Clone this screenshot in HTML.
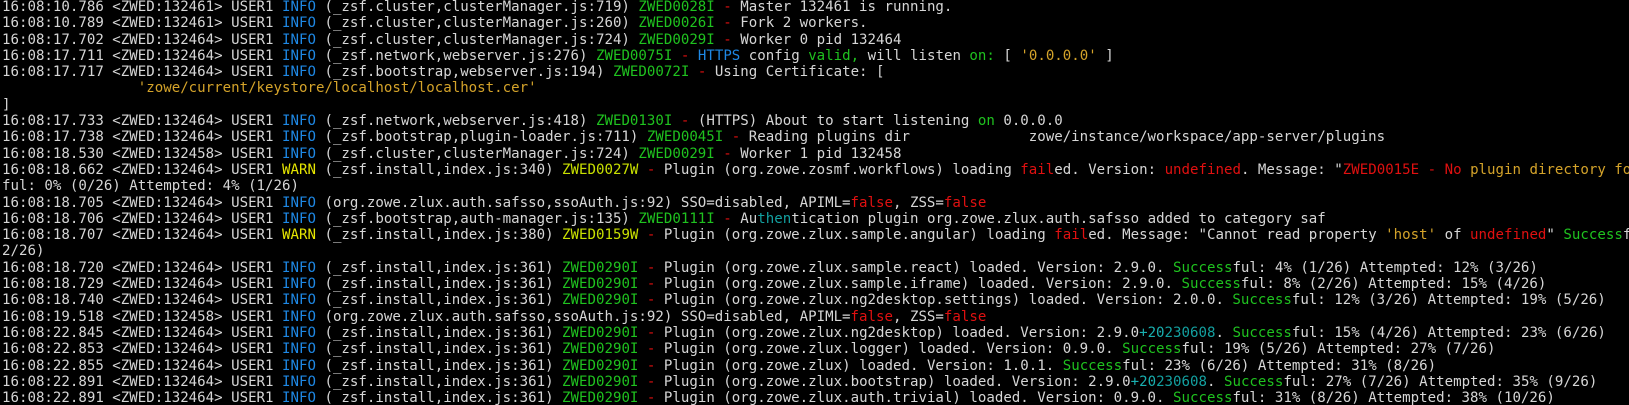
<!DOCTYPE html>
<html><head><meta charset="utf-8"><style>
html,body{margin:0;padding:0;background:#000;width:1629px;height:405px;overflow:hidden}
pre{margin:0;padding:0 0 0 2px;position:relative;top:-1px;font-family:"DejaVu Sans Mono","Liberation Mono",monospace;font-size:14.1px;line-height:16.3px;color:#d6d6d6;white-space:pre;overflow:hidden}
.b{color:#1e88e5}.g{color:#1fc21f}.r{color:#e01010}.y{color:#e6e600}.yg{color:#c8e000}.o{color:#d4a32a}.c{color:#19b0b0}.t{color:#13a0a0}
</style></head><body><pre>16:08:10.786 &lt;ZWED:132461&gt; USER1 <span class="b">INFO</span> (_zsf.cluster,clusterManager.js:719) <span class="g">ZWED0028I</span> <span class="r">-</span> Master 132461 is running.
16:08:10.789 &lt;ZWED:132461&gt; USER1 <span class="b">INFO</span> (_zsf.cluster,clusterManager.js:260) <span class="g">ZWED0026I</span> <span class="r">-</span> Fork 2 workers.
16:08:17.702 &lt;ZWED:132464&gt; USER1 <span class="b">INFO</span> (_zsf.cluster,clusterManager.js:724) <span class="g">ZWED0029I</span> <span class="r">-</span> Worker 0 pid 132464
16:08:17.711 &lt;ZWED:132464&gt; USER1 <span class="b">INFO</span> (_zsf.network,webserver.js:276) <span class="g">ZWED0075I</span> <span class="r">-</span> <span class="b">HTTPS</span> config <span class="g">valid,</span> will listen <span class="g">on:</span> [ <span class="o">'0.0.0.0'</span> ]
16:08:17.717 &lt;ZWED:132464&gt; USER1 <span class="b">INFO</span> (_zsf.bootstrap,webserver.js:194) <span class="g">ZWED0072I</span> <span class="r">-</span> Using Certificate: [
                <span class="o">'zowe/current/keystore/localhost/localhost.cer'</span>
]
16:08:17.733 &lt;ZWED:132464&gt; USER1 <span class="b">INFO</span> (_zsf.network,webserver.js:418) <span class="g">ZWED0130I</span> <span class="r">-</span> (HTTPS) About to start listening <span class="g">on</span> 0.0.0.0
16:08:17.738 &lt;ZWED:132464&gt; USER1 <span class="b">INFO</span> (_zsf.bootstrap,plugin-loader.js:711) <span class="g">ZWED0045I</span> <span class="r">-</span> Reading plugins dir              zowe/instance/workspace/app-server/plugins
16:08:18.530 &lt;ZWED:132458&gt; USER1 <span class="b">INFO</span> (_zsf.cluster,clusterManager.js:724) <span class="g">ZWED0029I</span> <span class="r">-</span> Worker 1 pid 132458
16:08:18.662 &lt;ZWED:132464&gt; USER1 <span class="y">WARN</span> (_zsf.install,index.js:340) <span class="yg">ZWED0027W</span> <span class="r">-</span> Plugin (org.zowe.zosmf.workflows) loading <span class="r">fail</span>ed. Version: <span class="r">undefined</span>. Message: "<span class="r">ZWED0015E - No</span> <span class="o">plugin directory found</span>
ful: 0% (0/26) Attempted: 4% (1/26)
16:08:18.705 &lt;ZWED:132464&gt; USER1 <span class="b">INFO</span> (org.zowe.zlux.auth.safsso,ssoAuth.js:92) SSO=disabled, APIML=<span class="r">false</span>, ZSS=<span class="r">false</span>
16:08:18.706 &lt;ZWED:132464&gt; USER1 <span class="b">INFO</span> (_zsf.bootstrap,auth-manager.js:135) <span class="g">ZWED0111I</span> <span class="r">-</span> Au<span class="t">then</span>tication plugin org.zowe.zlux.auth.safsso added to category saf
16:08:18.707 &lt;ZWED:132464&gt; USER1 <span class="y">WARN</span> (_zsf.install,index.js:380) <span class="yg">ZWED0159W</span> <span class="r">-</span> Plugin (org.zowe.zlux.sample.angular) loading <span class="r">fail</span>ed. Message: "Cannot read property <span class="o">'host'</span> of <span class="r">undefined</span>" <span class="g">Success</span>ful
2/26)
16:08:18.720 &lt;ZWED:132464&gt; USER1 <span class="b">INFO</span> (_zsf.install,index.js:361) <span class="g">ZWED0290I</span> <span class="r">-</span> Plugin (org.zowe.zlux.sample.react) loaded. Version: 2.9.0. <span class="g">Success</span>ful: 4% (1/26) Attempted: 12% (3/26)
16:08:18.729 &lt;ZWED:132464&gt; USER1 <span class="b">INFO</span> (_zsf.install,index.js:361) <span class="g">ZWED0290I</span> <span class="r">-</span> Plugin (org.zowe.zlux.sample.iframe) loaded. Version: 2.9.0. <span class="g">Success</span>ful: 8% (2/26) Attempted: 15% (4/26)
16:08:18.740 &lt;ZWED:132464&gt; USER1 <span class="b">INFO</span> (_zsf.install,index.js:361) <span class="g">ZWED0290I</span> <span class="r">-</span> Plugin (org.zowe.zlux.ng2desktop.settings) loaded. Version: 2.0.0. <span class="g">Success</span>ful: 12% (3/26) Attempted: 19% (5/26)
16:08:19.518 &lt;ZWED:132458&gt; USER1 <span class="b">INFO</span> (org.zowe.zlux.auth.safsso,ssoAuth.js:92) SSO=disabled, APIML=<span class="r">false</span>, ZSS=<span class="r">false</span>
16:08:22.845 &lt;ZWED:132464&gt; USER1 <span class="b">INFO</span> (_zsf.install,index.js:361) <span class="g">ZWED0290I</span> <span class="r">-</span> Plugin (org.zowe.zlux.ng2desktop) loaded. Version: 2.9.0<span class="c">+20</span><span class="t">230608</span>. <span class="g">Success</span>ful: 15% (4/26) Attempted: 23% (6/26)
16:08:22.853 &lt;ZWED:132464&gt; USER1 <span class="b">INFO</span> (_zsf.install,index.js:361) <span class="g">ZWED0290I</span> <span class="r">-</span> Plugin (org.zowe.zlux.logger) loaded. Version: 0.9.0. <span class="g">Success</span>ful: 19% (5/26) Attempted: 27% (7/26)
16:08:22.855 &lt;ZWED:132464&gt; USER1 <span class="b">INFO</span> (_zsf.install,index.js:361) <span class="g">ZWED0290I</span> <span class="r">-</span> Plugin (org.zowe.zlux) loaded. Version: 1.0.1. <span class="g">Success</span>ful: 23% (6/26) Attempted: 31% (8/26)
16:08:22.891 &lt;ZWED:132464&gt; USER1 <span class="b">INFO</span> (_zsf.install,index.js:361) <span class="g">ZWED0290I</span> <span class="r">-</span> Plugin (org.zowe.zlux.bootstrap) loaded. Version: 2.9.0<span class="c">+20</span><span class="t">230608</span>. <span class="g">Success</span>ful: 27% (7/26) Attempted: 35% (9/26)
16:08:22.891 &lt;ZWED:132464&gt; USER1 <span class="b">INFO</span> (_zsf.install,index.js:361) <span class="g">ZWED0290I</span> <span class="r">-</span> Plugin (org.zowe.zlux.auth.trivial) loaded. Version: 0.9.0. <span class="g">Success</span>ful: 31% (8/26) Attempted: 38% (10/26)
</pre></body></html>
